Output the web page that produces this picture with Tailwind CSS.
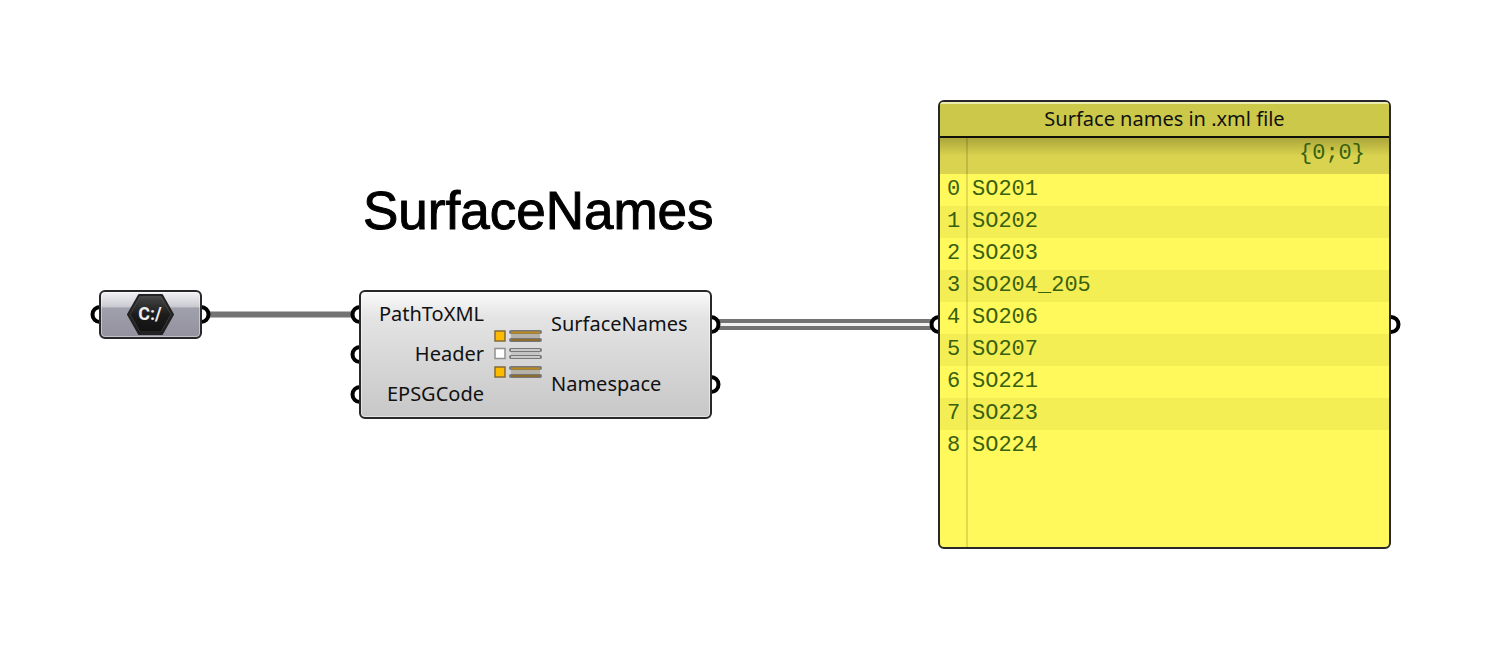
<!DOCTYPE html>
<html lang="en">
<head>
<meta charset="utf-8">
<title>SurfaceNames</title>
<script src="https://cdn.jsdelivr.net/npm/@tailwindcss/browser@4"></script>
</head>
<body class="bg-white">
<main class="relative min-h-screen overflow-hidden bg-white font-['Noto_Sans',sans-serif] text-xl leading-5 text-[#111]">
  <!-- wires and grips, below the nodes -->
  <svg class="absolute left-0 top-0 h-[648px] w-[1490px]" viewBox="0 0 1490 648" fill="none" aria-hidden="true">
    <path d="M208 314.500H352" stroke="#737373" stroke-width="6"/>
    <path d="M718 324.500H932" stroke="#737373" stroke-width="11"/>
    <path d="M718 324.500H932" stroke="#f2f2f2" stroke-width="3"/>
    <g fill="#fff" stroke="#000" stroke-width="4">
      <circle cx="100" cy="314.500" r="7.500"/><circle cx="201" cy="314.500" r="7.500"/>
      <circle cx="360" cy="314.500" r="7.500"/><circle cx="360" cy="354.500" r="7.500"/><circle cx="360" cy="394.500" r="7.500"/>
      <circle cx="711" cy="324.500" r="7.500"/><circle cx="711" cy="384.500" r="7.500"/>
      <circle cx="939" cy="324.500" r="7.500"/><circle cx="1391" cy="324.500" r="7.500"/>
    </g>
  </svg>

  <h1 class="absolute left-[363px] top-[181px] font-['Liberation_Sans',sans-serif] text-[53px] leading-[60px] text-black [-webkit-text-stroke:1px_#000]">SurfaceNames</h1>

  <section aria-label="File path" class="absolute left-[99px] top-[290px] flex h-[49px] w-[103px] items-center justify-center rounded-md border-2 border-[#28282b] bg-[linear-gradient(#f2f2f5,#cbcbd3_32%,#a09fac_36%,#94929f)] shadow-[inset_0_0_0_1px_#ffffff70]">
    <svg class="h-11 w-12" viewBox="0 0 48 44" role="img" aria-label="C:/">
      <defs><linearGradient id="hex" x2="0" y2="1"><stop stop-color="#484848"/><stop offset=".5" stop-color="#1c1c1c"/><stop offset="1" stop-color="#101010"/></linearGradient></defs>
      <path d="M12 2H35L46 21.500 35 41H12L1 21.500Z" fill="url(#hex)" stroke="#222" stroke-width="2" stroke-linejoin="round"/>
      <path d="M13 4H34L44 21.500 34 39H13L3 21.500Z" fill="none" stroke="#555" stroke-opacity=".6"/>
      <text x="23" y="27" text-anchor="middle" class="fill-[#eee] font-['Roboto',sans-serif] text-[18px] font-bold">C:/</text>
    </svg>
  </section>

  <section aria-label="SurfaceNames component" class="absolute left-[359px] top-[290px] flex h-[129px] w-[353px] rounded-md border-2 border-[#28282a] bg-linear-to-b from-[#fbfbfb] via-[#e4e4e4] via-20% to-[#c7c7c7] py-3 pl-[11px] shadow-[inset_0_0_0_1px_#ffffff80]">
    <ul class="flex w-28 flex-col gap-5 text-right"><li>PathToXML</li><li>Header</li><li>EPSGCode</li></ul>
    <svg class="ml-2 mt-6 h-[52px] w-[50px]" viewBox="0 0 50 52" aria-hidden="true">
      <g stroke="#826b35" stroke-width="1.500" fill="#fdbb00"><path d="M3 3h10v10H3zM3 39h10v10H3z"/></g>
      <path d="M3 20.500h10v10H3z" fill="#fff" stroke="#919191" stroke-width="1.500"/>
      <g fill="#b5b2aa"><path d="M19 4H48V12H19zM19 40H48V48H19z"/><path d="M19 22H48V29H19z" fill="#c4c4c4"/></g>
      <g stroke-linecap="round" stroke="#77777a" stroke-width="4"><path d="M19 4H48M19 12H48M19 22H48M19 29H48M19 40H48M19 48H48"/></g>
      <path d="M19 4.500H48M19 40.500H48" stroke="#bd8918" stroke-width="2"/>
      <path d="M19 12H48M19 48H48" stroke="#8d6c2d" stroke-width="2"/>
      <path d="M19 22H48M19 29H48" stroke="#c8c8c8" stroke-width="2"/>
    </svg>
    <ul class="ml-[9px] flex w-[138px] flex-col gap-10 pt-[10px]"><li>SurfaceNames</li><li>Namespace</li></ul>
  </section>

  <section class="absolute left-[938px] top-[100px] h-[449px] w-[453px] overflow-hidden rounded-md border-2 border-[#28282a] bg-[#fff95b]">
    <h2 class="h-9 border-b-2 border-[#11110b] bg-[#ccc84a] text-center leading-[34px] shadow-[inset_0_2px_0_#eeedb0]">Surface names in .xml file</h2>
    <div class="relative h-full font-['Liberation_Mono',monospace] text-[22px] text-[#38600f]">
      <p class="h-9 bg-linear-to-b from-[#aca63c] to-[#d9d34f] to-50% pr-6 text-right leading-8">{0;0}</p>
      <table class="w-full border-collapse leading-7">
        <tbody>
          <tr class="h-8"><th scope="row" class="w-8 p-0 pl-[7px] text-left font-normal">0</th><td class="p-0">SO201</td></tr>
          <tr class="h-8 bg-[#f4ee55]"><th scope="row" class="p-0 pl-[7px] text-left font-normal">1</th><td class="p-0">SO202</td></tr>
          <tr class="h-8"><th scope="row" class="p-0 pl-[7px] text-left font-normal">2</th><td class="p-0">SO203</td></tr>
          <tr class="h-8 bg-[#f4ee55]"><th scope="row" class="p-0 pl-[7px] text-left font-normal">3</th><td class="p-0">SO204_205</td></tr>
          <tr class="h-8"><th scope="row" class="p-0 pl-[7px] text-left font-normal">4</th><td class="p-0">SO206</td></tr>
          <tr class="h-8 bg-[#f4ee55]"><th scope="row" class="p-0 pl-[7px] text-left font-normal">5</th><td class="p-0">SO207</td></tr>
          <tr class="h-8"><th scope="row" class="p-0 pl-[7px] text-left font-normal">6</th><td class="p-0">SO221</td></tr>
          <tr class="h-8 bg-[#f4ee55]"><th scope="row" class="p-0 pl-[7px] text-left font-normal">7</th><td class="p-0">SO223</td></tr>
          <tr class="h-8"><th scope="row" class="p-0 pl-[7px] text-left font-normal">8</th><td class="p-0">SO224</td></tr>
        </tbody>
      </table>
      <span class="absolute inset-y-0 left-[26px] w-0.5 bg-black/12"></span>
    </div>
  </section>
</main>
</body>
</html>
